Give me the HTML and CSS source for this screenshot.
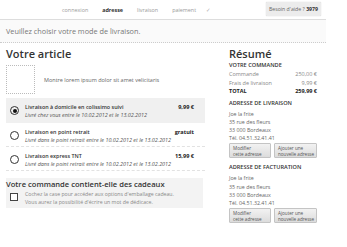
FILE: index.html
```html
<!DOCTYPE html>
<html lang="fr">

<head>
    <meta charset="UTF-8">
    <meta name="viewport" content="width=device-width, initial-scale=1.0">
    <title>Livraison</title>
    <link rel="stylesheet" href="styles.css">
</head>

<body>
    <div class="page">
        <header class="topbar">
            <nav class="steps">
                <span>connexion</span>
                <span class="current">adresse</span>
                <span>livraison</span>
                <span>paiement</span>
                <span class="check">&#10003;</span>
            </nav>
            <div class="help">Besoin d'aide ? <b>3979</b></div>
        </header>

        <div class="intro">Veuillez choisir votre mode de livraison.</div>

        <main class="checkout">
            <section class="col-main">
                <h2>Votre article</h2>
                <div class="article">
                    <div class="thumb"></div>
                    <p>Montre lorem ipsum dolor sit amet velicitaris</p>
                </div>

                <ul class="shipping">
                    <li class="option selected">
                        <span class="radio"></span>
                        <div class="option-text">
                            <span class="price">9,99 €</span>
                            <strong>Livraison à domicile en colissimo suivi</strong>
                            <em>Livré chez vous entre le 10.02.2012 et le 13.02.2012</em>
                        </div>
                    </li>
                    <li class="option">
                        <span class="radio"></span>
                        <div class="option-text">
                            <span class="price">gratuit</span>
                            <strong>Livraison en point retrait</strong>
                            <em>Livré dans le point retrait entre le 10.02.2012 et le 13.02.2012</em>
                        </div>
                    </li>
                    <li class="option">
                        <span class="radio"></span>
                        <div class="option-text">
                            <span class="price">15,99 €</span>
                            <strong>Livraison express TNT</strong>
                            <em>Livré dans le point retrait entre le 10.02.2012 et le 13.02.2012</em>
                        </div>
                    </li>
                </ul>

                <div class="gift">
                    <h3>Votre commande contient-elle des cadeaux</h3>
                    <div class="gift-row">
                        <span class="checkbox"></span>
                        <p>Cochez la case pour accéder aux options d'emballage cadeau.<br>
                            Vous aurez la possibilité d'écrire un mot de dédicace.</p>
                    </div>
                </div>
            </section>

            <aside class="summary">
                <h2>Résumé</h2>
                <h4>Votre commande</h4>
                <table class="totals">
                    <tr><td>Commande</td><td>250,00 €</td></tr>
                    <tr><td>Frais de livraison</td><td>9,99 €</td></tr>
                    <tr class="total"><td>TOTAL</td><td>259,99 €</td></tr>
                </table>

                <h4 class="addr-title">Adresse de livraison</h4>
                <address>
                    Joe la frite<br>
                    35 rue des fleurs<br>
                    33 000 Bordeaux<br>
                    Tél. 04.51.32.41.41
                </address>
                <div class="buttons">
                    <button>Modifier<br>cette adresse</button>
                    <button>Ajouter une<br>nouvelle adresse</button>
                </div>

                <h4 class="addr-title">Adresse de facturation</h4>
                <address>
                    Joe la frite<br>
                    35 rue des fleurs<br>
                    33 000 Bordeaux<br>
                    Tél. 04.51.32.41.41
                </address>
                <div class="buttons">
                    <button>Modifier<br>cette adresse</button>
                    <button>Ajouter une<br>nouvelle adresse</button>
                </div>
            </aside>
        </main>
    </div>
</body>

</html>
```

FILE: styles.css
```css
* {
    margin: 0;
    padding: 0;
    box-sizing: border-box;
}

body {
    font-family: "Open Sans", "DejaVu Sans", sans-serif;
    color: #444;
    background-color: #fff;
}

.page {
    width: 326px;
}

/* top steps bar */
.topbar {
    height: 20px;
    display: flex;
    align-items: center;
    justify-content: space-between;
    border-bottom: 1px solid #ddd;
    padding: 0 5px 0 62px;
}

.steps {
    display: flex;
    gap: 14px;
    font-size: 5.4px;
    color: #999;
}

.steps .current {
    color: #333;
    font-weight: bold;
}

.steps .check {
    color: #aaa;
    margin-left: -4px;
}

.help {
    background-color: #ececec;
    border-radius: 1px;
    box-shadow: 0 0 1px #bbb;
    font-size: 5.2px;
    color: #666;
    white-space: nowrap;
    padding: 3px 3px;
    margin-top: -2px;
}

.help b {
    color: #333;
}

.intro {
    height: 23px;
    padding: 6px 6px 0;
    font-size: 7.3px;
    color: #777;
    background-color: #fafafa;
    border-bottom: 1px dotted #ccc;
}

/* columns */
.checkout {
    display: flex;
    gap: 24px;
    padding: 0 6px;
}

.col-main {
    width: 199px;
}

.summary {
    width: 89px;
}

h2 {
    font-size: 11px;
    line-height: 14px;
    font-weight: 600;
    color: #333;
    margin-top: 4px;
}

/* article */
.article {
    display: flex;
    align-items: center;
    gap: 9px;
    margin-top: 4px;
    padding-bottom: 4px;
}

.thumb {
    width: 29px;
    height: 29px;
    border: 1px dotted #bbb;
}

.article p {
    font-size: 5.5px;
    color: #666;
}

/* shipping options */
.shipping {
    list-style: none;
}

.option {
    display: flex;
    align-items: flex-start;
    padding: 5px 11px 5px 4px;
    border-bottom: 1px dashed #e2e2e2;
    height: 24px;
}

.option.selected {
    background-color: #f0f0f0;
    border-bottom: none;
    height: 25px;
}

.radio {
    width: 9px;
    height: 9px;
    border: 1px solid #333;
    border-radius: 50%;
    margin-top: 3px;
    flex-shrink: 0;
    position: relative;
}

.selected .radio::after {
    content: "";
    position: absolute;
    left: 1.5px;
    top: 1.5px;
    width: 4px;
    height: 4px;
    border-radius: 50%;
    background-color: #111;
}

.option-text {
    flex: 1;
    margin-left: 6px;
    font-size: 5.4px;
    line-height: 8px;
    white-space: nowrap;
}

.option-text strong {
    display: block;
    color: #333;
    font-weight: 600;
}

.option-text em {
    display: block;
    color: #555;
}

.price {
    float: right;
    font-size: 5.6px;
    font-weight: bold;
    line-height: 8px;
    color: #222;
}

/* gift box */
.gift {
    margin-top: 7px;
    background-color: #f3f3f3;
    height: 30px;
    width: 197px;
}

.gift h3 {
    font-size: 7.6px;
    line-height: 10px;
    font-weight: 600;
    color: #333;
    padding-top: 1px;
}

.gift-row {
    display: flex;
    gap: 7px;
    padding-left: 4px;
    margin-top: 2px;
}

.checkbox {
    width: 8px;
    height: 8px;
    border: 1px solid #444;
    margin-top: 2px;
    background-color: #fff;
}

.gift-row p {
    font-size: 5.2px;
    line-height: 7.5px;
    color: #888;
    white-space: nowrap;
}

/* summary */
.summary h4 {
    font-size: 5.6px;
    font-weight: 600;
    text-transform: uppercase;
    color: #333;
    line-height: 9px;
    white-space: nowrap;
}

.totals {
    width: 88px;
    border-collapse: collapse;
    font-size: 5.5px;
    color: #888;
}

.totals td {
    line-height: 8.5px;
    padding: 0;
}

.totals td:last-child {
    text-align: right;
}

.totals .total td {
    color: #222;
    font-weight: bold;
}

.summary .addr-title {
    margin-top: 3px;
}

address {
    font-style: normal;
    font-size: 5.3px;
    line-height: 8.2px;
    color: #666;
    margin-top: 2px;
}

.buttons {
    display: flex;
    gap: 3px;
    margin-top: 1px;
    margin-bottom: 5px;
}

button {
    width: 42px;
    height: 15px;
    font-family: "Open Sans", "DejaVu Sans", sans-serif;
    font-size: 4.6px;
    line-height: 6px;
    color: #555;
    text-align: left;
    white-space: nowrap;
    padding: 1px 3px;
    border: 1px solid #c4c4c4;
    border-radius: 1px;
    background: linear-gradient(#f2f2f2, #dcdcdc);
}

.buttons button:last-child {
    width: 43px;
}
```
